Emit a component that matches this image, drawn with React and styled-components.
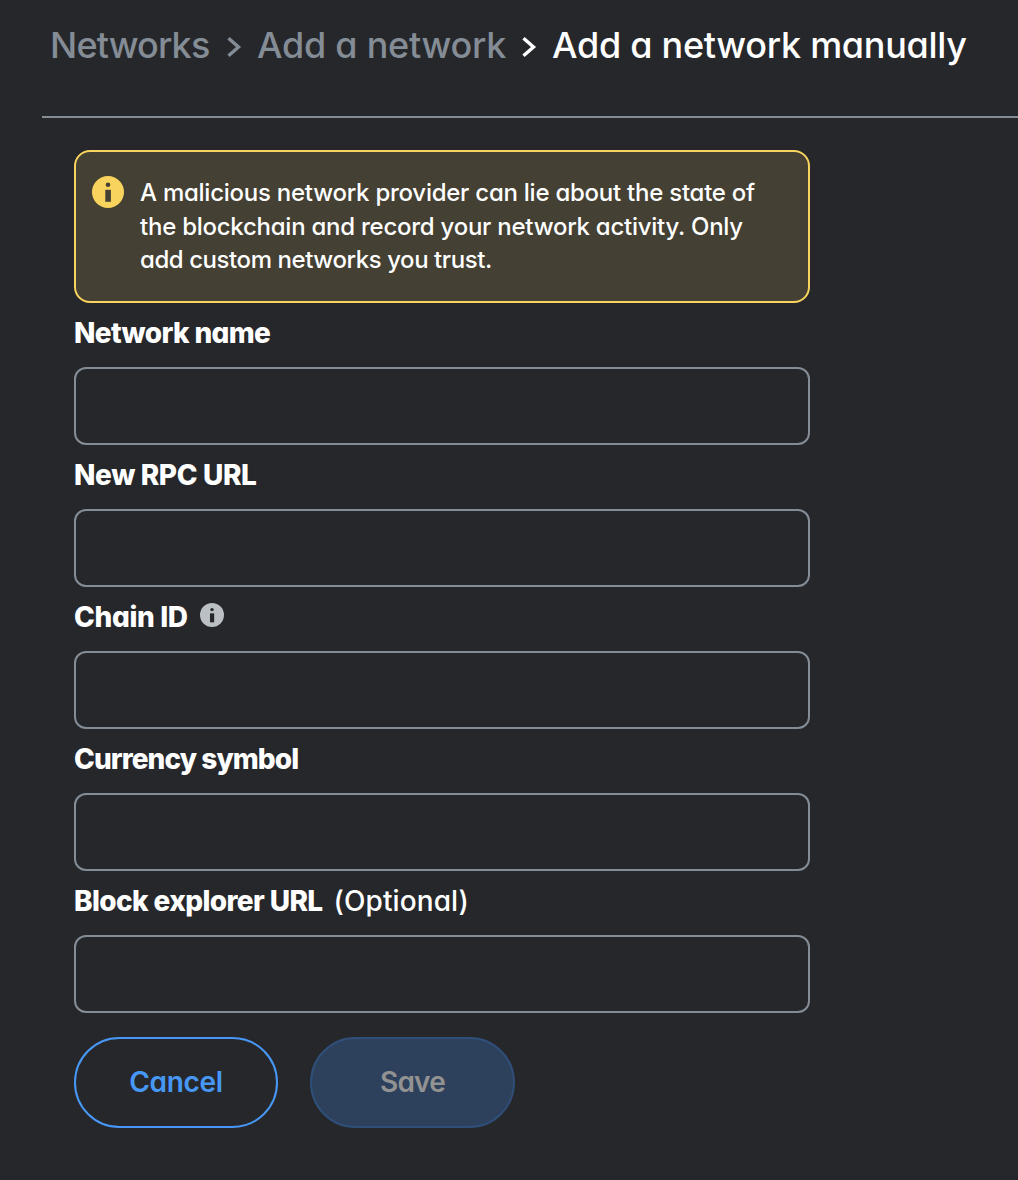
import React from "react";
import styled, { createGlobalStyle } from "styled-components";

const GlobalStyle = createGlobalStyle`
  *, *::before, *::after { box-sizing: border-box; }
  body {
    margin: 0;
    background: #26272b;
    color: #ffffff;
    font-family: Inter, "Liberation Sans", sans-serif;
    font-feature-settings: "cv11" 1, "calt" 0;
  }
`;

const Page = styled.main`
  min-height: 1180px;
  padding-left: 42px;
  overflow: hidden;
`;

const Breadcrumbs = styled.nav`
  display: flex;
  align-items: center;
  height: 118px;
  padding: 0 0 26px 8px;
  border-bottom: 2px solid #848c96;
  font-size: 36px;
  font-weight: 450;
  line-height: 50px;
  white-space: nowrap;
`;

const Crumb = styled.span`
  width: ${(p) => p.$width}px;
  letter-spacing: ${(p) => p.$tracking}px;
  color: ${(p) => (p.$current ? "#ffffff" : "#848c96")};
`;

const Chevron = styled.svg`
  flex: none;
  width: 16px;
  height: 22px;
  margin: 3px ${(p) => p.$after}px 0 0;
  fill: none;
  stroke: ${(p) => (p.$current ? "#ffffff" : "#848c96")};
  stroke-width: 3.4;
`;

const Form = styled.form`
  display: flex;
  flex-direction: column;
  width: 736px;
  margin: 32px 0 0 32px;
`;

const Warning = styled.div`
  display: flex;
  gap: 16px;
  height: 153px;
  padding: 24px 16px;
  border: 2px solid #f8d35e;
  border-radius: 16px;
  background: #444033;
`;

const WarningText = styled.p`
  margin: 0;
  font-size: 24px;
  font-weight: 500;
  line-height: 33.6px;
  white-space: nowrap;
`;

const Line = styled.span`
  display: block;
  letter-spacing: ${(p) => p.$tracking}px;
`;

const Field = styled.label`
  display: block;
  height: 142px;
`;

const FieldHeader = styled.span`
  display: flex;
  align-items: center;
  height: 64px;
  padding-bottom: 4px;
  font-size: 28px;
  line-height: 40px;
  white-space: nowrap;
`;

const FieldName = styled.span`
  font-weight: 800;
  letter-spacing: ${(p) => p.$tracking}px;
`;

const Optional = styled.span`
  margin-left: 11px;
  font-weight: 450;
  letter-spacing: ${(p) => p.$tracking}px;
`;

const Input = styled.input`
  display: block;
  width: 100%;
  height: 78px;
  padding: 0 24px;
  border: 2px solid #848c96;
  border-radius: 12px;
  outline: none;
  background: transparent;
  color: inherit;
  font: inherit;
  font-size: 28px;
`;

const Actions = styled.div`
  display: flex;
  gap: 32px;
  margin-top: 24px;
`;

const Button = styled.button`
  width: ${(p) => (p.$primary ? 205 : 204)}px;
  height: 91px;
  padding: 0 0 1px;
  border: 2px solid ${(p) => (p.$primary ? "#2f4f78" : "#4797f5")};
  border-radius: 46px;
  background: ${(p) => (p.$primary ? "#2d415c" : "transparent")};
  color: ${(p) => (p.$primary ? "#929292" : "#4797f5")};
  font: inherit;
  font-size: 28px;
  font-weight: 600;
  letter-spacing: ${(p) => p.$tracking}px;
`;

const Icon = styled.svg`
  flex: none;
  display: block;
  width: ${(p) => p.$size}px;
  height: ${(p) => p.$size}px;
`;

const HelpIcon = styled.span`
  margin: -4px 0 0 12px;
`;

function InfoIcon({ size, color, cutout }) {
  return (
    <Icon $size={size} viewBox="0 0 32 32" aria-hidden="true">
      <circle cx="16" cy="16" r="16" fill={color} />
      <circle cx="16" cy="8.8" r="2.3" fill={cutout} />
      <rect x="13.3" y="13.8" width="5.6" height="12" fill={cutout} />
    </Icon>
  );
}

function Separator({ current, after }) {
  return (
    <Chevron viewBox="0 0 16 22" $current={current} $after={after} aria-hidden="true">
      <path d="M2.5 2.2 L12.5 11 L2.5 19.8" />
    </Chevron>
  );
}

const fields = [
  { name: "Network name", tracking: -0.65 },
  { name: "New RPC URL", tracking: -0.38 },
  { name: "Chain ID", tracking: -0.35, help: true },
  { name: "Currency symbol", tracking: -0.93 },
  { name: "Block explorer URL", tracking: -0.62, optional: true },
];

export default function App() {
  return (
    <>
      <GlobalStyle />
      <Page>
        <Breadcrumbs>
          <Crumb $width={176} $tracking={-0.85}>Networks</Crumb>
          <Separator after={15} />
          <Crumb $width={264} $tracking={-0.25}>Add a network</Crumb>
          <Separator current after={15} />
          <Crumb $current $tracking={-0.28}>Add a network manually</Crumb>
        </Breadcrumbs>
        <Form onSubmit={(e) => e.preventDefault()}>
          <Warning>
            <InfoIcon size={32} color="#f8d35e" cutout="#444033" />
            <WarningText>
              <Line $tracking={-0.25}>A malicious network provider can lie about the state of</Line>
              <Line $tracking={-0.25}>the blockchain and record your network activity. Only</Line>
              <Line $tracking={-0.43}>add custom networks you trust.</Line>
            </WarningText>
          </Warning>
          {fields.map((f) => (
            <Field key={f.name}>
              <FieldHeader>
                <FieldName $tracking={f.tracking}>{f.name}</FieldName>
                {f.help && (
                  <HelpIcon>
                    <InfoIcon size={24} color="#bbc0c5" cutout="#26272b" />
                  </HelpIcon>
                )}
                {f.optional && <Optional $tracking={0.1}>(Optional)</Optional>}
              </FieldHeader>
              <Input type="text" />
            </Field>
          ))}
          <Actions>
            <Button type="button" $tracking={-0.3}>Cancel</Button>
            <Button type="submit" disabled $primary $tracking={-0.8}>Save</Button>
          </Actions>
        </Form>
      </Page>
    </>
  );
}
